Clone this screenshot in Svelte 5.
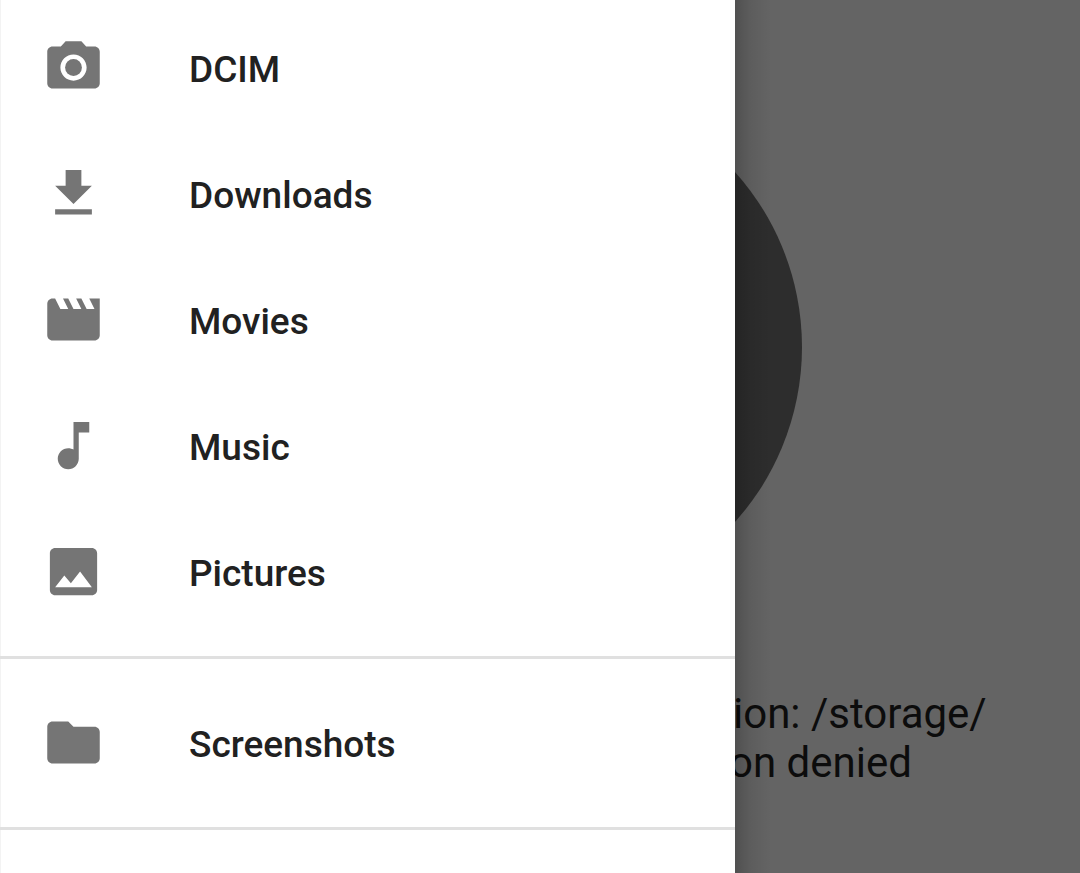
<script>
  const folders = [
    { name: 'DCIM', icon: 'M9 2 7.17 4H4c-1.1 0-2 .9-2 2v12c0 1.1.9 2 2 2h16c1.1 0 2-.9 2-2V6c0-1.1-.9-2-2-2h-3.17L15 2zm3 15c-2.76 0-5-2.24-5-5s2.24-5 5-5 5 2.24 5 5-2.24 5-5 5z', dot: true },
    { name: 'Downloads', icon: 'M19 9h-4V3H9v6H5l7 7zM5 18v2h14v-2z' },
    { name: 'Movies', icon: 'M18 4l2 4h-3l-2-4h-2l2 4h-3l-2-4H8l2 4H7L5 4H4c-1.1 0-1.99.9-1.99 2L2 18c0 1.1.9 2 2 2h16c1.1 0 2-.9 2-2V4z' },
    { name: 'Music', icon: 'M12 3v10.55c-.59-.34-1.27-.55-2-.55-2.21 0-4 1.79-4 4s1.79 4 4 4 4-1.79 4-4V7h4V3z' },
    { name: 'Pictures', icon: 'M21 19V5c0-1.1-.9-2-2-2H5c-1.1 0-2 .9-2 2v14c0 1.1.9 2 2 2h14c1.1 0 2-.9 2-2zM8.5 13.5l2.5 3.01L14.5 12l4.5 6H5z' }
  ];
  const saved = [
    { name: 'Screenshots', icon: 'M10 4H4c-1.1 0-1.99.9-1.99 2L2 18c0 1.1.9 2 2 2h16c1.1 0 2-.9 2-2V8c0-1.1-.9-2-2-2h-8z' }
  ];
</script>

{#snippet row(item)}
  <li>
    <a href="#{item.name}">
      <svg viewBox="0 0 24 24" aria-hidden="true">
        <path d={item.icon} />
        {#if item.dot}<circle cx="12" cy="12" r="3.2" />{/if}
      </svg>
      <span>{item.name}</span>
    </a>
  </li>
{/snippet}

<div class="screen">
  <main>
    <div class="circle"></div>
    <p>ion: /storage/<br />on denied</p>
  </main>
  <nav>
    <ul>
      {#each folders as item}{@render row(item)}{/each}
    </ul>
    <ul>
      {#each saved as item}{@render row(item)}{/each}
    </ul>
    <ul></ul>
  </nav>
</div>

<style>
  :global(body) {
    margin: 0;
  }
  .screen {
    display: grid;
    grid-template-columns: 49fr 23fr;
    min-height: 100vh;
    overflow: hidden;
    background: #646464;
    font-family: Roboto, sans-serif;
  }
  nav {
    position: relative;
    grid-area: 1 / 1;
    z-index: 1;
    min-width: 0;
    background: #fff;
    box-shadow: inset 1px 0 #f3f3f3;
  }
  /* Edge shadow that the drawer casts on the page */
  nav::after {
    content: '';
    position: absolute;
    top: 0;
    bottom: 0;
    left: 100%;
    width: 36px;
    background: linear-gradient(to right, rgba(0, 0, 0, 0.2), rgba(0, 0, 0, 0.07) 45%, transparent);
  }
  ul {
    margin: 0;
    padding: 22px 0 20px;
    list-style: none;
  }
  ul:first-child {
    padding-top: 6px;
  }
  ul + ul {
    border-top: 3px solid #e0e0e0;
  }
  a {
    display: flex;
    align-items: center;
    gap: 84px;
    height: 126px;
    padding-left: 42px;
    color: #212121;
    font-size: 37px;
    font-weight: 500;
    text-decoration: none;
  }
  svg {
    width: 63px;
    height: 63px;
    margin-bottom: 4px;
    fill: #757575;
  }
  main {
    grid-area: 1 / 2;
    display: flex;
    flex-direction: column;
    min-width: 0;
  }
  .circle {
    width: 524px;
    height: 524px;
    margin: 85px 0 0 -457px;
    border-radius: 50%;
    background: #2d2d2d;
  }
  p {
    margin: 80px 0 0 -6px;
    color: #0c0c0c;
    font-size: 42px;
    line-height: 49px;
    text-indent: 4px;
    white-space: nowrap;
  }
</style>
